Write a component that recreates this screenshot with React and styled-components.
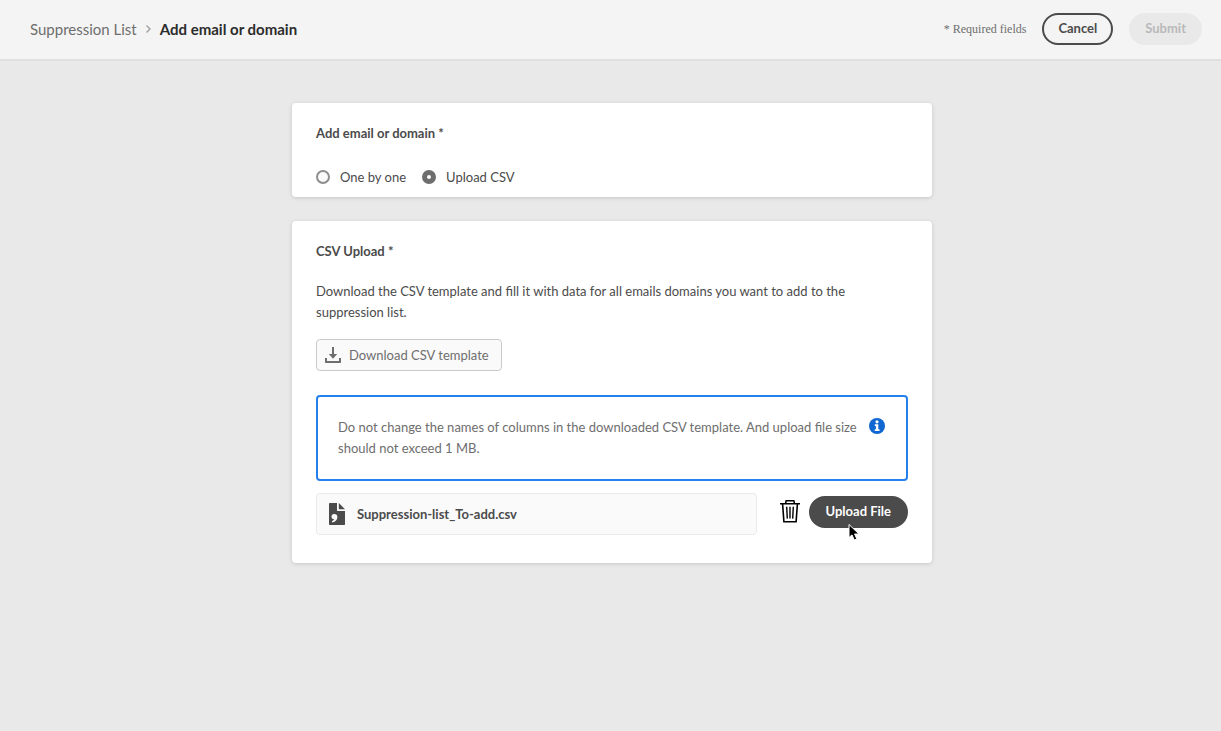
import React, { useState } from "react";
import styled, { createGlobalStyle } from "styled-components";

const GlobalStyle = createGlobalStyle`
  *, *::before, *::after { box-sizing: border-box; }
  body {
    margin: 0;
    background: #e9e9e9;
    color: #4b4b4b;
    font-family: Lato, "Noto Sans", sans-serif;
    font-size: 13px;
    line-height: 21px;
  }
  button, input { font: inherit; }
`;

const Header = styled.header`
  display: flex;
  align-items: center;
  justify-content: space-between;
  padding: 13px 19px 14px 30px;
  background: #f4f4f4;
  border-bottom: 2px solid #e0e0e0;
`;

const Breadcrumb = styled.nav`
  display: flex;
  align-items: center;
  gap: 8px;
  font-size: 15px;
`;

const CrumbLink = styled.a`
  color: #6e6e6e;
  text-decoration: none;
`;

const Crumb = styled.h1`
  margin: 0;
  color: #2c2c2c;
  font-size: 15px;
  font-weight: 700;
`;

const Actions = styled.div`
  display: flex;
  align-items: center;
  gap: 16px;
`;

const Required = styled.span`
  color: #6e6e6e;
  font-family: "Liberation Serif", serif;
  font-size: 12px;
`;

const PillButton = styled.button`
  position: relative;
  height: 32px;
  padding: 0 ${(p) => (p.$filled ? "15px" : "14px")} 2px;
  border: 2px solid ${(p) => (p.disabled ? "#e9e9e9" : "#4b4b4b")};
  border-radius: 16px;
  background: ${(p) => (p.$filled ? "#4b4b4b" : p.disabled ? "#e9e9e9" : "transparent")};
  color: ${(p) => (p.$filled ? "#fff" : p.disabled ? "#b9b9b9" : "#4b4b4b")};
  font-weight: 700;
  white-space: nowrap;
`;

const Main = styled.main`
  display: flex;
  flex-direction: column;
  gap: 24px;
  max-width: 640px;
  margin: 42px auto;
`;

const PageBody = styled.div`
  padding-left: 3px;
`;

const Card = styled.section`
  padding: 20px 24px ${(p) => (p.$compact ? "10px" : "28px")};
  border-radius: 4px;
  background: #fff;
  box-shadow: 0 1px 4px rgba(0, 0, 0, 0.15);
`;

const CardTitle = styled.h2`
  margin: 0;
  font-size: 13px;
  line-height: 20px;
  font-weight: 700;
`;

const RadioRow = styled.div`
  display: flex;
  gap: 16px;
  margin-top: 24px;
`;

const RadioLabel = styled.label`
  display: flex;
  align-items: center;
  gap: 10px;
  line-height: 20px;
`;

const Radio = styled.input`
  appearance: none;
  width: 14px;
  height: 14px;
  margin: 0;
  border: 2px solid #8e8e8e;
  border-radius: 50%;
  background: #fafafa;

  &:checked {
    border: 5px solid #6e6e6e;
    background: #fff;
  }
`;

const Paragraph = styled.p`
  margin: 20px 0 16px;
`;

const DownloadButton = styled.button`
  display: flex;
  align-items: center;
  gap: 8px;
  height: 32px;
  padding: 0 12px 0 8px;
  border: 1px solid #cacaca;
  border-radius: 4px;
  background: #fafafa;
  color: #6e6e6e;
`;

const Notice = styled.div`
  display: flex;
  align-items: flex-start;
  gap: 10px;
  margin: 24px 0 12px;
  padding: 20px;
  border: 2px solid #2680eb;
  border-radius: 4px;
  color: #6e6e6e;

  p { flex: 1; margin: 0; }
  svg { flex: none; margin: 1px; }
`;

const FileRow = styled.div`
  display: flex;
  align-items: flex-start;
`;

const FileBox = styled.div`
  display: flex;
  flex: 1;
  align-items: center;
  gap: 12px;
  height: 42px;
  padding: 0 12px;
  border: 1px solid #eaeaea;
  border-radius: 4px;
  background: #fafafa;
  font-weight: 700;
`;

const FileActions = styled.div`
  display: flex;
  align-items: flex-start;
  gap: 9px;
  padding: 3px 0 0 23px;
`;

const IconButton = styled.button`
  display: flex;
  padding: 4px 0;
  border: 0;
  background: none;
`;

const Pointer = styled.svg`
  position: absolute;
  top: 25px;
  left: 36px;
`;

const Chevron = () => (
  <svg width="7" height="10" viewBox="0 0 7 10" fill="none" stroke="#a0a0a0" strokeWidth="1.4" aria-hidden="true">
    <path d="M1.5 1.5 5 5 1.5 8.5" />
  </svg>
);

const DownloadIcon = () => (
  <svg width="16" height="16" viewBox="0 0 16 16" fill="#6e6e6e" aria-hidden="true">
    <path d="M7 0h2v7h3.2L8 11.8 3.8 7H7z" />
    <path d="M0 11h2v3h12v-3h2v4.3a.7.7 0 0 1-.7.7H.7a.7.7 0 0 1-.7-.7z" />
  </svg>
);

const InfoIcon = () => (
  <svg width="16" height="16" viewBox="0 0 16 16" aria-hidden="true">
    <circle cx="8" cy="8" r="8" fill="#1167d2" />
    <circle cx="8" cy="3.8" r="1.6" fill="#fff" />
    <path d="M5.8 6.2h3.5v5h1.2V13H5.7v-1.8h1.200V8H5.800z" fill="#fff" />
  </svg>
);

const FileIcon = () => (
  <svg width="16" height="22" viewBox="0 0 16 22" fill="#4b4b4b" aria-hidden="true">
    <path d="M9.8 0v6.2H16z" />
    <path
      fillRule="evenodd"
      d="M.8 0H8v7.3a.7.7 0 0 0 .7.7H16v13.2a.8.8 0 0 1-.8.8H.8a.8.8 0 0 1-.8-.8V.8A.8.8 0 0 1 .8 0zM5.5 11a2.800 2.800 0 0 0-3 2.700c0 1.700 1.400 2.600 2.700 2.400-.2 1.100-1.100 1.800-2.300 2.200l.4 1.300c3.200-.6 5.100-2.800 5.100-5.500 0-1.900-1.200-3-2.900-3.100z"
    />
  </svg>
);

const TrashIcon = () => (
  <svg width="20" height="23" viewBox="0 0 20 23" fill="none" stroke="#000" aria-hidden="true">
    <path d="M0 3.8h20M5.5 3.8l.6-3h7.8l.6 3" strokeWidth="1.5" />
    <path d="M2.6 4l1.3 17.8h12.2L17.4 4" strokeWidth="1.6" />
    <path d="M6.7 6.8l.6 11.8M10 6.8v11.8M13.3 6.8l-.6 11.8" strokeWidth="1.4" />
  </svg>
);

const MousePointer = () => (
  <Pointer width="14" height="20" viewBox="0 0 14 20" aria-hidden="true">
    <path d="M2 1.5v13l3-2.6 2.3 5.1 2.5-1.1L7.6 11H12z" fill="#000" stroke="#fff" />
  </Pointer>
);

export default function App() {
  const [mode, setMode] = useState("csv");
  return (
    <>
      <GlobalStyle />
      <Header>
        <Breadcrumb aria-label="Breadcrumb">
          <CrumbLink href="#suppression-list">Suppression List</CrumbLink>
          <Chevron />
          <Crumb>Add email or domain</Crumb>
        </Breadcrumb>
        <Actions>
          <Required>* Required fields</Required>
          <PillButton type="button">Cancel</PillButton>
          <PillButton type="submit" disabled>Submit</PillButton>
        </Actions>
      </Header>
      <PageBody>
        <Main>
          <Card $compact>
            <CardTitle>Add email or domain *</CardTitle>
            <RadioRow role="radiogroup" aria-label="Add email or domain">
              <RadioLabel>
                <Radio type="radio" name="mode" checked={mode === "single"} onChange={() => setMode("single")} />
                One by one
              </RadioLabel>
              <RadioLabel>
                <Radio type="radio" name="mode" checked={mode === "csv"} onChange={() => setMode("csv")} />
                Upload CSV
              </RadioLabel>
            </RadioRow>
          </Card>
          <Card>
            <CardTitle>CSV Upload *</CardTitle>
            <Paragraph>
              Download the CSV template and fill it with data for all emails domains you want to add to the
              suppression list.
            </Paragraph>
            <DownloadButton type="button">
              <DownloadIcon />
              Download CSV template
            </DownloadButton>
            <Notice role="note">
              <p>
                Do not change the names of columns in the downloaded CSV template. And upload file size should not
                exceed 1 MB.
              </p>
              <InfoIcon />
            </Notice>
            <FileRow>
              <FileBox>
                <FileIcon />
                Suppression-list_To-add.csv
              </FileBox>
              <FileActions>
                <IconButton type="button" aria-label="Delete file">
                  <TrashIcon />
                </IconButton>
                <PillButton type="button" $filled>
                  Upload File
                  <MousePointer />
                </PillButton>
              </FileActions>
            </FileRow>
          </Card>
        </Main>
      </PageBody>
    </>
  );
}
